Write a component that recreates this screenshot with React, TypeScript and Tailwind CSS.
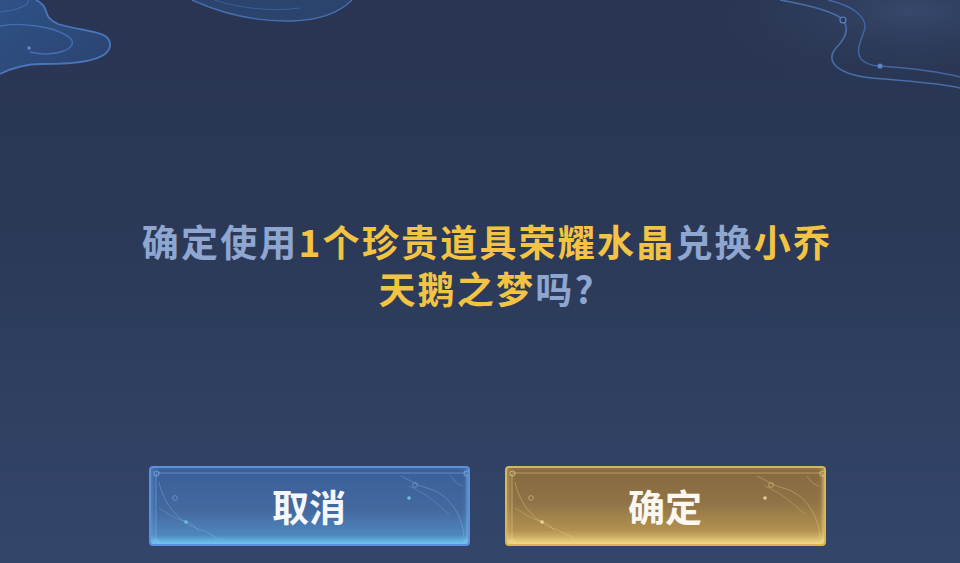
import React from "react";

const font = { fontFamily: '"Noto Sans CJK SC", "Noto Sans", sans-serif' };

function TopLeftSwirl() {
  return (
    <svg
      className="pointer-events-none absolute left-0 top-0"
      width="380"
      height="100"
      viewBox="0 0 380 100"
      fill="none"
    >
      <defs>
        <linearGradient id="swirlFill" x1="0" y1="0" x2="1" y2="1">
          <stop offset="0" stopColor="#30568f" />
          <stop offset="1" stopColor="#2b4676" />
        </linearGradient>
      </defs>
      <path
        d="M0 0 H36 C52 8 40 16 58 24 C84 32 112 30 110 46 C108 62 72 64 42 64 C22 64 8 70 0 74 Z"
        fill="url(#swirlFill)"
        opacity="0.85"
      />
      <path
        d="M36 0 C52 8 40 16 58 24 C84 32 112 30 110 46 C108 62 72 64 42 64 C22 64 8 70 0 74"
        stroke="#4d7cc4"
        strokeWidth="1.8"
        opacity="0.9"
      />
      <path
        d="M0 26 C18 22 56 26 70 38 C80 48 56 58 30 52"
        stroke="#4a77bd"
        strokeWidth="1.4"
        opacity="0.8"
      />
      <path d="M0 12 C20 10 30 4 28 0" stroke="#4671b4" strokeWidth="1.2" opacity="0.7" />
      <circle cx="29" cy="48" r="1.8" fill="#5b8ad0" />
      <path
        d="M192 0 C214 10 248 22 292 21 C326 20 342 10 352 0 Z"
        fill="#2c4672"
        opacity="0.85"
      />
      <path
        d="M192 0 C214 10 248 22 292 21 C326 20 342 10 352 0"
        stroke="#4470b0"
        strokeWidth="1.4"
      />
      <path d="M214 0 C240 8 270 12 300 8" stroke="#3f68a8" strokeWidth="1" opacity="0.7" />
    </svg>
  );
}

function TopRightSwirl() {
  return (
    <svg
      className="pointer-events-none absolute right-0 top-0"
      width="320"
      height="110"
      viewBox="0 0 320 110"
      fill="none"
    >
      <defs>
        <radialGradient id="cornerGlow" cx="0.85" cy="0.1" r="0.7">
          <stop offset="0" stopColor="#3a4d72" stopOpacity="0.8" />
          <stop offset="1" stopColor="#2a3753" stopOpacity="0" />
        </radialGradient>
      </defs>
      <rect width="320" height="110" fill="url(#cornerGlow)" />
      <path
        d="M140 0 C168 5 194 12 202 19 C210 28 206 38 196 48 C186 60 194 74 232 78 C268 81 298 83 320 88"
        stroke="#4a74b4"
        strokeWidth="1.6"
        opacity="0.9"
      />
      <path
        d="M188 0 C210 5 226 15 225 28 C222 40 214 50 222 60 C228 65 234 66 240 66 C270 68 300 72 320 77"
        stroke="#4670b0"
        strokeWidth="1.4"
        opacity="0.85"
      />
      <circle cx="203" cy="20" r="3" stroke="#5a86c8" strokeWidth="1.2" fill="#2b3a58" />
      <circle cx="240" cy="66" r="2.6" fill="#5a86c8" />
    </svg>
  );
}

function ButtonDecor({ line, dot }: { line: string; dot: string }) {
  return (
    <svg
      className="pointer-events-none absolute inset-0"
      width="321"
      height="80"
      viewBox="0 0 321 80"
      fill="none"
    >
      <rect x="5" y="5" width="311" height="70" rx="1" stroke={line} strokeOpacity="0.45" strokeWidth="1" />
      <circle cx="5.5" cy="5.5" r="2.6" stroke={line} strokeOpacity="0.7" strokeWidth="1" fill="none" />
      <circle cx="315.5" cy="5.5" r="2.6" stroke={line} strokeOpacity="0.7" strokeWidth="1" fill="none" />
      <circle cx="5.5" cy="74.5" r="2.6" stroke={line} strokeOpacity="0.7" strokeWidth="1" fill="none" />
      <circle cx="315.5" cy="74.5" r="2.6" stroke={line} strokeOpacity="0.7" strokeWidth="1" fill="none" />
      <path d="M8 14 C12 34 26 54 50 62 C60 66 68 70 72 78" stroke={line} strokeOpacity="0.35" strokeWidth="1" />
      <path d="M8 40 C20 48 28 52 34 53 C40 54 44 58 48 64" stroke={line} strokeOpacity="0.3" strokeWidth="1" />
      <circle cx="24" cy="30" r="2.4" stroke={line} strokeOpacity="0.45" strokeWidth="1" />
      <circle cx="35" cy="54" r="1.8" fill={dot} fillOpacity="0.8" />
      <path d="M250 8 C262 14 268 18 276 20 C300 26 312 50 313 70" stroke={line} strokeOpacity="0.35" strokeWidth="1" />
      <path d="M300 8 C304 14 306 16 312 18" stroke={line} strokeOpacity="0.3" strokeWidth="1" />
      <path d="M258 18 C280 28 290 40 298 46" stroke={line} strokeOpacity="0.3" strokeWidth="1" />
      <circle cx="264" cy="17" r="2.4" stroke={line} strokeOpacity="0.45" strokeWidth="1" />
      <circle cx="258" cy="30" r="1.8" fill={dot} fillOpacity="0.85" />
    </svg>
  );
}

function CancelButton() {
  return (
    <button
      className="relative flex h-[80px] w-[321px] items-center justify-center overflow-hidden rounded-[4px] border-2 border-[#5c90de] bg-[linear-gradient(180deg,#3b5e9a_0%,#43699f_55%,#4f86bd_88%,#63b8e4_100%)] shadow-[inset_0_-3px_6px_rgba(110,210,240,0.55)]"
      style={font}
    >
      <ButtonDecor line="#8cc0f0" dot="#6fd0ea" />
      <span className="relative text-[37px] font-bold leading-none text-[#f4f7fb]">取消</span>
    </button>
  );
}

function ConfirmButton() {
  return (
    <button
      className="relative flex h-[80px] w-[321px] items-center justify-center overflow-hidden rounded-[4px] border-2 border-[#d8b653] bg-[linear-gradient(180deg,#86693f_0%,#8f7346_45%,#b29150_82%,#e6cb79_100%)] shadow-[inset_0_-3px_6px_rgba(250,226,140,0.6)]"
      style={font}
    >
      <ButtonDecor line="#f1d995" dot="#f6e3a6" />
      <span className="relative text-[37px] font-bold leading-none text-[#fbf8f1]">确定</span>
    </button>
  );
}

export default function App() {
  const gray = "inline-block h-[47px] text-[#8ea6d0]";
  const gold = "inline-block h-[47px] text-[#f3c443]";
  return (
    <div
      className="relative h-[563px] w-full overflow-hidden bg-[linear-gradient(180deg,#293552_0%,#2b3957_40%,#33466a_100%)]"
      style={font}
    >
      <TopLeftSwirl />
      <TopRightSwirl />
      <div className="relative flex flex-col items-center pl-[14px] pt-[218px]">
        <div className="flex flex-col items-center text-[37px] font-bold leading-[47px] tracking-[2.2px]">
          <div className="flex h-[47px]">
            <span className={gray}>确定使用</span>
            <span className={gold}>1个珍贵道具荣耀水晶</span>
            <span className={gray}>兑换</span>
            <span className={gold}>小乔</span>
          </div>
          <div className="flex h-[47px]">
            <span className={gold}>天鹅之梦</span>
            <span className={gray}>吗?</span>
          </div>
        </div>
        <div className="mt-[154px] flex gap-[35px]">
          <CancelButton />
          <ConfirmButton />
        </div>
      </div>
    </div>
  );
}
